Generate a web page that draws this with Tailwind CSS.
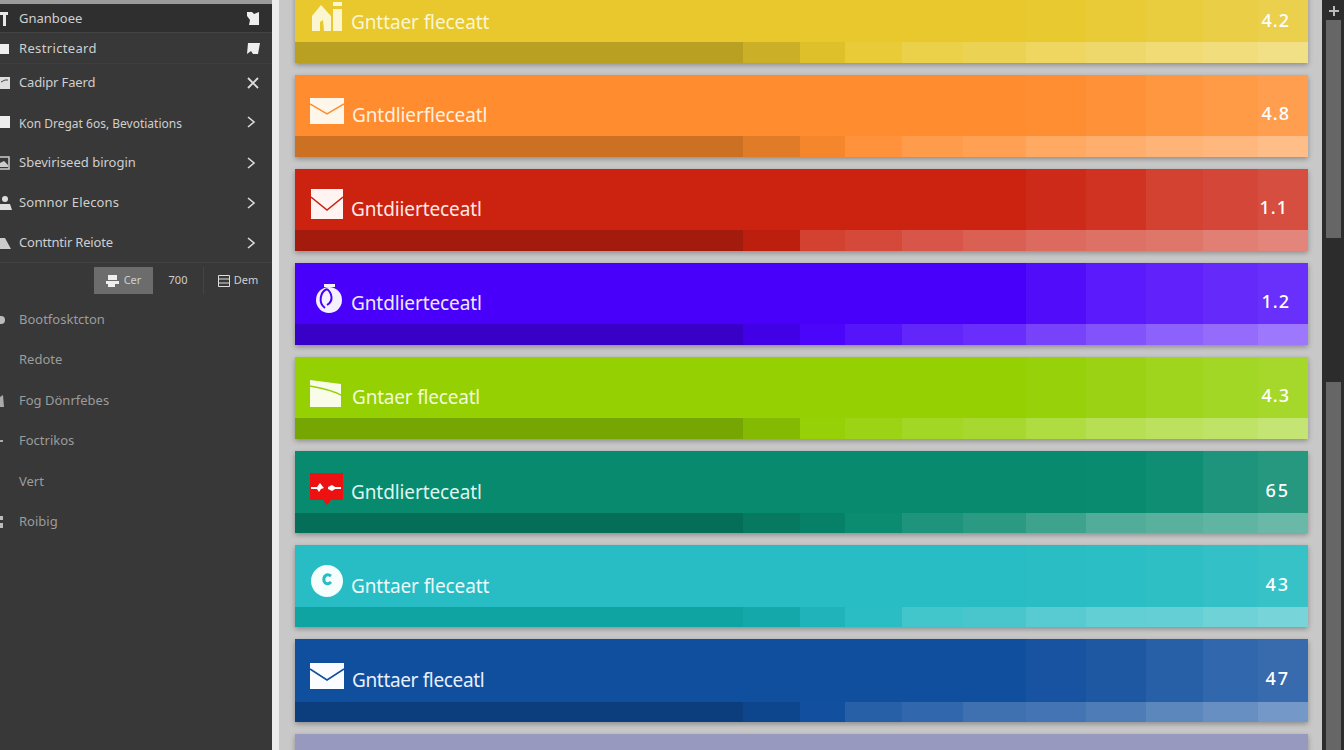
<!doctype html>
<html lang="en">
<head>
<meta charset="utf-8">
<title>Rated list</title>
<script src="https://cdn.jsdelivr.net/npm/@tailwindcss/browser@4"></script>
</head>
<body class="m-0 h-[750px] w-[1344px] overflow-hidden bg-[#c8c8c8] font-['Noto_Sans',sans-serif]">
<div class="flex h-[750px] w-[1344px]">

  <!-- sidebar -->
  <aside class="flex h-[750px] w-[272px] shrink-0 flex-col overflow-hidden bg-[#383838] text-[13px] text-[#cfcfcf]">
    <div class="h-[4px] shrink-0 bg-[#9b9b9b]"></div>
    <div class="flex h-[28px] shrink-0 items-center bg-[#2f2f2f] pt-[1px]">
      <svg class="h-[14px] w-[19px] shrink-0" viewBox="0 0 19 14"><path fill="#e8e8e8" d="M0 0h8v3H6v11H3V3H0z"/></svg>
      <span>Gnanboee</span>
      <svg class="ml-auto mr-[12px] h-[13px] w-[14px]" viewBox="0 0 14 13"><path fill="#eee" d="M1 0h5l2 2 5-2v13H3l1-5-3-4z"/></svg>
    </div>
    <div class="flex h-[31px] shrink-0 items-center border-t border-[#444] pt-[1px]">
      <svg class="h-[12px] w-[19px] shrink-0" viewBox="0 0 19 12"><rect width="9" height="10" y="1" fill="#eee"/></svg>
      <span class="tracking-[0.35px]">Restricteard</span>
      <svg class="ml-auto mr-[12px] h-[13px] w-[14px]" viewBox="0 0 14 13"><path fill="#eee" d="M2 1h12l-2 11H7l-2-3-4 3z"/></svg>
    </div>
    <div class="flex h-[38px] shrink-0 items-center border-t border-[#3f3f3f]">
      <svg class="h-[14px] w-[19px] shrink-0" viewBox="0 0 19 14"><path fill="#ddd" d="M0 1h10v12H0z"/><path stroke="#444" fill="none" d="M1 6l4-2h3"/></svg>
      <span class="tracking-[-0.15px]">Cadipr Faerd</span>
      <svg class="ml-auto mr-[12px] h-[14px] w-[14px]" viewBox="0 0 14 14"><path stroke="#ddd" stroke-width="1.8" fill="none" d="M2 2l10 10M12 2L2 12"/></svg>
    </div>
    <div class="flex h-[41px] shrink-0 items-center pt-[1px]">
      <svg class="h-[12px] w-[19px] shrink-0" viewBox="0 0 19 12"><rect width="10" height="12" fill="#eee"/></svg>
      <span class="pt-[3px] text-[12px]">Kon Dregat 6os, Bevotiations</span>
      <svg class="ml-auto mr-[16px] h-[12px] w-[10px]" viewBox="0 0 10 12"><path stroke="#ddd" stroke-width="1.6" fill="none" d="M2 1l6 5-6 5"/></svg>
    </div>
    <div class="flex h-[40px] shrink-0 items-center pt-[1px]">
      <svg class="h-[14px] w-[19px] shrink-0" viewBox="0 0 19 14"><path fill="none" stroke="#ccc" stroke-width="1.5" d="M0 1h9v12H0"/><path fill="#ccc" d="M0 7l4-2 4 4v2H0z"/></svg>
      <span>Sbeviriseed birogin</span>
      <svg class="ml-auto mr-[16px] h-[12px] w-[10px]" viewBox="0 0 10 12"><path stroke="#ddd" stroke-width="1.6" fill="none" d="M2 1l6 5-6 5"/></svg>
    </div>
    <div class="flex h-[40px] shrink-0 items-center pt-[1px]">
      <svg class="h-[16px] w-[19px] shrink-0" viewBox="0 0 19 16"><circle cx="5" cy="4" r="3" fill="#ddd"/><path fill="#ddd" d="M0 9h10l2 6H0z"/></svg>
      <span class="tracking-[0.15px]">Somnor Elecons</span>
      <svg class="ml-auto mr-[16px] h-[12px] w-[10px]" viewBox="0 0 10 12"><path stroke="#ddd" stroke-width="1.6" fill="none" d="M2 1l6 5-6 5"/></svg>
    </div>
    <div class="flex h-[40px] shrink-0 items-center pt-[1px]">
      <svg class="h-[14px] w-[19px] shrink-0" viewBox="0 0 19 14"><path fill="#ccc" d="M0 2h5l6 11H0z"/></svg>
      <span class="tracking-[-0.2px]">Conttntir Reiote</span>
      <svg class="ml-auto mr-[16px] h-[12px] w-[10px]" viewBox="0 0 10 12"><path stroke="#ddd" stroke-width="1.6" fill="none" d="M2 1l6 5-6 5"/></svg>
    </div>

    <div class="flex h-[36px] shrink-0 items-center border-t border-[#424242] pl-[94px] text-[11px]">
      <div class="flex h-[27px] w-[59px] items-center justify-center gap-[5px] bg-[#6c6c6c]">
        <svg class="h-[12px] w-[13px]" viewBox="0 0 13 12"><path fill="#eee" d="M2 0h9v5H2zM0 6h13v3H9v3H2V9H0z"/></svg>
        <span>Cer</span>
      </div>
      <span class="w-[50px] text-center">700</span>
      <div class="flex h-[27px] flex-1 items-center justify-center gap-[4px] border-l border-[#444]">
        <svg class="h-[12px] w-[12px]" viewBox="0 0 12 12"><path fill="none" stroke="#ddd" d="M.5.5h11v11H.5zM.5 4h11M.5 8h11"/></svg>
        <span>Dem</span>
      </div>
    </div>

    <div class="mt-[1px] flex flex-col text-[#9c9c9c]">
      <div class="flex h-[41px] items-center"><svg class="h-[10px] w-[19px] shrink-0" viewBox="0 0 19 10"><circle cx="1" cy="5" r="4" fill="#bbb"/></svg><span>Bootfosktcton</span></div>
      <div class="flex h-[40px] items-center pl-[19px]"><span>Redote</span></div>
      <div class="flex h-[41px] items-center"><svg class="h-[12px] w-[19px] shrink-0" viewBox="0 0 19 12"><path fill="#aaa" d="M0 2l3-2 1 12H0z"/></svg><span>Fog Dönrfebes</span></div>
      <div class="flex h-[40px] items-center"><svg class="h-[4px] w-[19px] shrink-0" viewBox="0 0 19 4"><rect y="1" width="3" height="2" fill="#aaa"/></svg><span>Foctrikos</span></div>
      <div class="flex h-[41px] items-center pl-[19px]"><span>Vert</span></div>
      <div class="flex h-[40px] items-center"><svg class="h-[12px] w-[19px] shrink-0" viewBox="0 0 19 12"><path fill="#bbb" d="M0 0h3v4H0zM0 7h3v5H0z"/></svg><span>Roibig</span></div>
    </div>
  </aside>

  <div class="w-[7px] shrink-0 bg-[#ececec]"></div>

  <!-- list -->
  <main class="flex h-[750px] w-[1043px] shrink-0 flex-col overflow-hidden pl-[16px]">
    <div class="-mt-[20px] flex flex-col gap-[12px]">

      <div class="relative flex h-[83px] w-[1013px] shrink-0 flex-col bg-[#e8c82c] shadow-[0_2px_5px_rgba(0,0,0,0.3)]">
        <div class="absolute inset-x-0 top-0 flex h-[62px]"><div class="w-[731px]"></div><div class="w-[60px] bg-white/2"></div><div class="w-[60px] bg-white/5"></div><div class="w-[57px] bg-white/9"></div><div class="w-[55px] bg-white/12"></div><div class="w-[50px] bg-white/16"></div></div>
        <div class="relative flex h-[62px] items-center pl-[16px] pr-[18px] pt-[18px] text-white">
          <svg class="h-[30px] w-[31px] shrink-0 -translate-y-[3px]" viewBox="0 0 31 30"><path fill="#fbf6d0" d="M10 3l10 11v15H1V14z"/><path fill="#e8c82c" d="M9 29v-9l3-2 1 11z"/><rect x="22" y="0" width="9" height="4" fill="#fbf6d0"/><rect x="22" y="7" width="9" height="22" fill="#fbf6d0"/></svg>
          <span class="ml-[9px] pt-[4px] text-[19px] tracking-[-0.1px] text-[#fbf6d0]">Gnttaer fleceatt</span>
          <span class="ml-auto text-[18px] font-medium tracking-[1px]">4.2</span>
        </div>
        <div class="flex h-[21px]">
          <div class="w-[448px] bg-black/20"></div><div class="w-[57px] bg-black/12"></div><div class="w-[45px] bg-black/4"></div><div class="w-[57px] bg-white/6"></div><div class="w-[61px] bg-white/14"></div><div class="w-[63px] bg-white/18"></div><div class="w-[60px] bg-white/25"></div><div class="w-[60px] bg-white/30"></div><div class="w-[57px] bg-white/35"></div><div class="w-[55px] bg-white/38"></div><div class="w-[50px] bg-white/43"></div>
        </div>
      </div>

      <div class="relative flex h-[82px] w-[1013px] shrink-0 flex-col bg-[#ff8c2e] shadow-[0_2px_5px_rgba(0,0,0,0.3)]">
        <div class="absolute inset-x-0 top-0 flex h-[61px]"><div class="w-[731px]"></div><div class="w-[60px] bg-white/2"></div><div class="w-[60px] bg-white/5"></div><div class="w-[57px] bg-white/9"></div><div class="w-[55px] bg-white/12"></div><div class="w-[50px] bg-white/16"></div></div>
        <div class="relative flex h-[61px] items-center pl-[15px] pr-[18px] pt-[16px] text-white">
          <svg class="h-[26px] w-[34px] shrink-0 -translate-y-[3px]" viewBox="0 0 34 26"><rect width="34" height="26" fill="#fff6ea"/><path fill="none" stroke="#ff8c2e" stroke-width="1.5" d="M0 6l17 10L34 6"/></svg>
          <span class="ml-[8px] pt-[4px] text-[19px] tracking-[-0.1px] text-[#fff0e0]">Gntdlierfleceatl</span>
          <span class="ml-auto text-[18px] font-medium tracking-[1px]">4.8</span>
        </div>
        <div class="flex h-[21px]">
          <div class="w-[448px] bg-black/20"></div><div class="w-[57px] bg-black/12"></div><div class="w-[45px] bg-black/4"></div><div class="w-[57px] bg-white/6"></div><div class="w-[61px] bg-white/14"></div><div class="w-[63px] bg-white/18"></div><div class="w-[60px] bg-white/25"></div><div class="w-[60px] bg-white/30"></div><div class="w-[57px] bg-white/35"></div><div class="w-[55px] bg-white/38"></div><div class="w-[50px] bg-white/43"></div>
        </div>
      </div>

      <div class="relative flex h-[82px] w-[1013px] shrink-0 flex-col bg-[#cc2210] shadow-[0_2px_5px_rgba(0,0,0,0.3)]">
        <div class="absolute inset-x-0 top-0 flex h-[61px]"><div class="w-[731px]"></div><div class="w-[60px] bg-white/4"></div><div class="w-[60px] bg-white/8"></div><div class="w-[57px] bg-white/14"></div><div class="w-[55px] bg-white/17"></div><div class="w-[50px] bg-white/20"></div></div>
        <div class="relative flex h-[61px] items-center pl-[16px] pr-[18px] pt-[16px] text-white">
          <svg class="h-[30px] w-[32px] shrink-0 -translate-y-[4px]" viewBox="0 0 32 30"><rect width="32" height="30" fill="#fff4f2"/><path fill="none" stroke="#cc2210" stroke-width="1.5" d="M0 8l16 13L32 8"/></svg>
          <span class="ml-[8px] pt-[4px] text-[19px] tracking-[-0.1px] text-[#ffe8e4]">Gntdiierteceatl</span>
          <span class="ml-auto mr-[2px] text-[18px] font-medium tracking-[1px]">1.1</span>
        </div>
        <div class="flex h-[21px]">
          <div class="w-[448px] bg-black/20"></div><div class="w-[57px] bg-black/8"></div><div class="w-[45px] bg-white/14"></div><div class="w-[57px] bg-white/18"></div><div class="w-[61px] bg-white/24"></div><div class="w-[63px] bg-white/28"></div><div class="w-[60px] bg-white/33"></div><div class="w-[60px] bg-white/36"></div><div class="w-[57px] bg-white/38"></div><div class="w-[55px] bg-white/42"></div><div class="w-[50px] bg-white/45"></div>
        </div>
      </div>

      <div class="relative flex h-[82px] w-[1013px] shrink-0 flex-col bg-[#4800fa] shadow-[0_2px_5px_rgba(0,0,0,0.3)]">
        <div class="absolute inset-x-0 top-0 flex h-[61px]"><div class="w-[731px]"></div><div class="w-[60px] bg-white/5"></div><div class="w-[60px] bg-white/10"></div><div class="w-[57px] bg-white/13"></div><div class="w-[55px] bg-white/16"></div><div class="w-[50px] bg-white/19"></div></div>
        <div class="relative flex h-[61px] items-center pl-[19px] pr-[18px] pt-[16px] text-white">
          <svg class="h-[30px] w-[29px] shrink-0 -translate-y-[3px]" viewBox="0 0 29 30"><circle cx="15" cy="16" r="13" fill="#f4f0ff"/><path fill="none" stroke="#4800fa" stroke-width="2" d="M13 5c-7 3-9 14-2 19M13 5c5 4 7 12 0 16"/><rect x="10" y="0" width="11" height="3" fill="#f4f0ff"/></svg>
          <span class="ml-[8px] pt-[4px] text-[19px] tracking-[-0.1px] text-[#eee8ff]">Gntdlierteceatl</span>
          <span class="ml-auto text-[18px] font-medium tracking-[1px]">1.2</span>
        </div>
        <div class="flex h-[21px]">
          <div class="w-[448px] bg-black/20"></div><div class="w-[57px] bg-black/8"></div><div class="w-[45px] bg-white/2"></div><div class="w-[57px] bg-white/8"></div><div class="w-[61px] bg-white/15"></div><div class="w-[63px] bg-white/18"></div><div class="w-[60px] bg-white/26"></div><div class="w-[60px] bg-white/32"></div><div class="w-[57px] bg-white/38"></div><div class="w-[55px] bg-white/42"></div><div class="w-[50px] bg-white/47"></div>
        </div>
      </div>

      <div class="relative flex h-[82px] w-[1013px] shrink-0 flex-col bg-[#94d002] shadow-[0_2px_5px_rgba(0,0,0,0.3)]">
        <div class="absolute inset-x-0 top-0 flex h-[61px]"><div class="w-[731px]"></div><div class="w-[60px] bg-white/3"></div><div class="w-[60px] bg-white/7"></div><div class="w-[57px] bg-white/11"></div><div class="w-[55px] bg-white/14"></div><div class="w-[50px] bg-white/17"></div></div>
        <div class="relative flex h-[61px] items-center pl-[15px] pr-[18px] pt-[16px] text-white">
          <svg class="h-[27px] w-[33px] shrink-0 -translate-y-[2px]" viewBox="0 0 33 27"><path fill="#f8fce8" d="M0 0l31 4v23H0z"/><path fill="none" stroke="#94d002" stroke-width="1.5" d="M0 6c12 2 24 5 33 10"/></svg>
          <span class="ml-[9px] pt-[4px] text-[19px] tracking-[-0.2px] text-[#f2fad8]">Gntaer fleceatl</span>
          <span class="ml-auto text-[18px] font-medium tracking-[1px]">4.3</span>
        </div>
        <div class="flex h-[21px]">
          <div class="w-[448px] bg-black/20"></div><div class="w-[57px] bg-black/10"></div><div class="w-[45px] bg-white/2"></div><div class="w-[57px] bg-white/8"></div><div class="w-[61px] bg-white/14"></div><div class="w-[63px] bg-white/18"></div><div class="w-[60px] bg-white/25"></div><div class="w-[60px] bg-white/32"></div><div class="w-[57px] bg-white/37"></div><div class="w-[55px] bg-white/40"></div><div class="w-[50px] bg-white/45"></div>
        </div>
      </div>

      <div class="relative flex h-[82px] w-[1013px] shrink-0 flex-col bg-[#078a6e] shadow-[0_2px_5px_rgba(0,0,0,0.3)]">
        <div class="absolute inset-x-0 top-0 flex h-[62px]"><div class="w-[791px]"></div><div class="w-[60px] bg-white/1"></div><div class="w-[57px] bg-white/4"></div><div class="w-[55px] bg-white/9"></div><div class="w-[50px] bg-white/12"></div></div>
        <div class="relative flex h-[62px] items-center pl-[15px] pr-[18px] pt-[16px] text-white">
          <svg class="h-[32px] w-[33px] shrink-0 -translate-y-[1px]" viewBox="0 0 33 32"><path fill="#ee1111" d="M0 0h33v27H21l-4 5-4-5H0z"/><path fill="#fff" d="M1 14h6l3-4 3 4 1 1-3 1-2 3-2-3H1zM18 14l4-2 3 2h6v2h-6l-3 2-4-2z"/></svg>
          <span class="ml-[8px] pt-[4px] text-[19px] tracking-[-0.1px] text-[#dff5ee]">Gntdlierteceatl</span>
          <span class="ml-auto text-[18px] font-medium tracking-[2px]">65</span>
        </div>
        <div class="flex h-[20px]">
          <div class="w-[448px] bg-black/20"></div><div class="w-[57px] bg-black/12"></div><div class="w-[45px] bg-black/6"></div><div class="w-[57px] bg-white/2"></div><div class="w-[61px] bg-white/9"></div><div class="w-[63px] bg-white/14"></div><div class="w-[60px] bg-white/22"></div><div class="w-[60px] bg-white/30"></div><div class="w-[57px] bg-white/33"></div><div class="w-[55px] bg-white/36"></div><div class="w-[50px] bg-white/40"></div>
        </div>
      </div>

      <div class="relative flex h-[82px] w-[1013px] shrink-0 flex-col bg-[#28bdc4] shadow-[0_2px_5px_rgba(0,0,0,0.3)]">
        <div class="absolute inset-x-0 top-0 flex h-[62px]"><div class="w-[731px]"></div><div class="w-[60px] bg-white/1"></div><div class="w-[60px] bg-white/2"></div><div class="w-[57px] bg-white/3"></div><div class="w-[55px] bg-white/5"></div><div class="w-[50px] bg-white/7"></div></div>
        <div class="relative flex h-[62px] items-center pl-[16px] pr-[18px] pt-[16px] text-white">
          <svg class="h-[32px] w-[32px] shrink-0 -translate-y-[3px]" viewBox="0 0 32 32"><circle cx="16" cy="16" r="16" fill="#f6fdfd"/><path fill="none" stroke="#28bdc4" stroke-width="3" d="M20 11c-4-3-8 0-7 5 1 3 4 4 7 1"/></svg>
          <span class="ml-[8px] pt-[4px] text-[19px] tracking-[-0.1px] text-[#ecfafa]">Gnttaer fleceatt</span>
          <span class="ml-auto text-[18px] font-medium tracking-[2px]">43</span>
        </div>
        <div class="flex h-[20px]">
          <div class="w-[448px] bg-[#0fa3a2]"></div><div class="w-[57px] bg-[#14a8aa]"></div><div class="w-[45px] bg-[#20b4ba]"></div><div class="w-[57px] bg-white/1"></div><div class="w-[61px] bg-white/12"></div><div class="w-[63px] bg-white/15"></div><div class="w-[60px] bg-white/22"></div><div class="w-[60px] bg-white/27"></div><div class="w-[57px] bg-white/28"></div><div class="w-[55px] bg-white/33"></div><div class="w-[50px] bg-white/37"></div>
        </div>
      </div>

      <div class="relative flex h-[83px] w-[1013px] shrink-0 flex-col bg-[#104e9e] shadow-[0_2px_5px_rgba(0,0,0,0.3)]">
        <div class="absolute inset-x-0 top-0 flex h-[63px]"><div class="w-[731px]"></div><div class="w-[60px] bg-white/3"></div><div class="w-[60px] bg-white/6"></div><div class="w-[57px] bg-white/10"></div><div class="w-[55px] bg-white/14"></div><div class="w-[50px] bg-white/17"></div></div>
        <div class="relative flex h-[63px] items-center pl-[15px] pr-[18px] pt-[16px] text-white">
          <svg class="h-[26px] w-[34px] shrink-0 -translate-y-[3px]" viewBox="0 0 34 26"><rect width="34" height="26" fill="#fafcff"/><path fill="none" stroke="#104e9e" stroke-width="1.5" d="M0 6l17 11L34 6"/></svg>
          <span class="ml-[8px] pt-[4px] text-[19px] tracking-[-0.35px] text-[#e8f0fa]">Gnttaer fleceatl</span>
          <span class="ml-auto text-[18px] font-medium tracking-[2px]">47</span>
        </div>
        <div class="flex h-[20px]">
          <div class="w-[448px] bg-black/20"></div><div class="w-[57px] bg-black/10"></div><div class="w-[45px] bg-white/1"></div><div class="w-[57px] bg-white/10"></div><div class="w-[61px] bg-white/14"></div><div class="w-[63px] bg-white/20"></div><div class="w-[60px] bg-white/22"></div><div class="w-[60px] bg-white/26"></div><div class="w-[57px] bg-white/32"></div><div class="w-[55px] bg-white/37"></div><div class="w-[50px] bg-white/42"></div>
        </div>
      </div>

      <div class="h-[82px] w-[1013px] shrink-0 bg-[#9899bf] shadow-[0_2px_5px_rgba(0,0,0,0.3)]"></div>
    </div>
  </main>

  <!-- scrollbar -->
  <div class="flex h-[750px] w-[22px] shrink-0 flex-col items-center bg-[#2c2c2c] pl-[1px]">
    <svg class="mt-[6px] h-[10px] w-[10px] shrink-0" viewBox="0 0 10 10"><path fill="#bbb" d="M4 0h2v4h4v2H6v4H4V6H0V4h4z"/></svg>
    <div class="mt-[4px] h-[218px] w-[15px] shrink-0 bg-[#666]"></div>
    <div class="mt-[144px] h-[368px] w-[15px] shrink-0 bg-[#666]"></div>
  </div>
</div>
</body>
</html>
